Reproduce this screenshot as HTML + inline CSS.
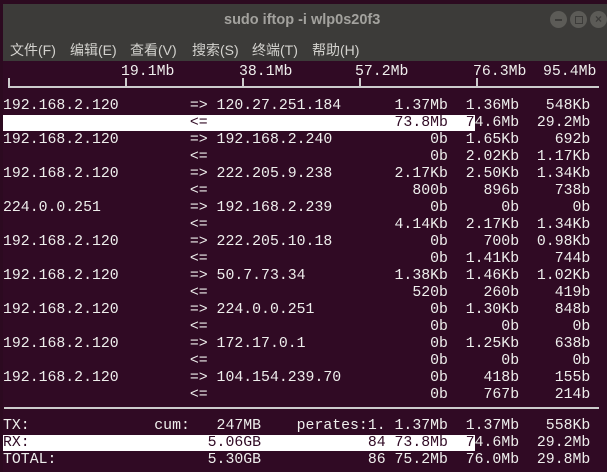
<!DOCTYPE html>
<html><head><meta charset="utf-8"><style>
*{margin:0;padding:0;box-sizing:border-box}
html,body{width:607px;height:472px;overflow:hidden;background:#2c0a20;position:relative}
#win{position:absolute;left:3px;top:4px;width:604px;height:468px;background:#300a24}
#title{position:absolute;left:0;top:0;width:604px;height:33px;background:#3c3b39;color:#a3a29e;font:bold 14.5px "Liberation Sans",sans-serif;text-align:center;line-height:27px}
#title span{position:absolute;left:221px;top:3px}
.btn{position:absolute;top:7px;width:17px;height:17px;border-radius:50%;background:#5c5b57}
#menu{position:absolute;left:0;top:33px;width:604px;height:24px;background:#3c3b39;color:#d3d2ce;font:14px "Liberation Sans","Noto Sans CJK SC",sans-serif}
#menu span{position:absolute;top:3px}
pre{position:absolute;left:0;font:14.83px/17px "Liberation Mono",monospace;color:#eeeeec;white-space:pre}
.w{background:#fff;color:#300a24}
.lbl{position:absolute;top:60px;font:14.83px/17px "Liberation Mono",monospace;color:#eeeeec}
.tk{position:absolute;top:74px;width:2px;height:10px;background:#ccc}
.hl{position:absolute;height:2px;background:#ccc}
</style></head><body>
<div id="win">
<div id="title"><span>sudo iftop -i wlp0s20f3</span>
<div class="btn" style="left:547px"><div style="position:absolute;left:5px;top:8px;width:7px;height:1.5px;background:#3c3b39"></div></div>
<div class="btn" style="left:567px"><div style="position:absolute;left:4.5px;top:4.5px;width:8px;height:8px;border:1.5px solid #3c3b39"></div></div>
<div class="btn" style="left:587px;color:#3c3b39;font:bold 12px 'Liberation Sans',sans-serif;text-align:center;line-height:17px">×</div>
</div>
<div id="menu"><span style="left:7px">文件(F)</span><span style="left:67px">编辑(E)</span><span style="left:127px">查看(V)</span><span style="left:189px">搜索(S)</span><span style="left:249px">终端(T)</span><span style="left:309px">帮助(H)</span></div>
<div class="lbl" style="left:118px">19.1Mb</div>
<div class="lbl" style="left:236px">38.1Mb</div>
<div class="lbl" style="left:352px">57.2Mb</div>
<div class="lbl" style="left:470px">76.3Mb</div>
<div class="lbl" style="left:540px">95.4Mb</div>
<div class="tk" style="left:5px"></div><div class="tk" style="left:122px"></div><div class="tk" style="left:239px"></div><div class="tk" style="left:356px"></div><div class="tk" style="left:473px"></div>
<div class="hl" style="left:5px;top:82px;width:591px"></div>
<pre style="top:94px">192.168.2.120        => 120.27.251.184      1.37Mb  1.36Mb   548Kb
<span class="w">                     &lt;=                     73.8Mb  7</span>4.6Mb  29.2Mb
192.168.2.120        => 192.168.2.240           0b  1.65Kb    692b
                     &lt;=                         0b  2.02Kb  1.17Kb
192.168.2.120        => 222.205.9.238       2.17Kb  2.50Kb  1.34Kb
                     &lt;=                       800b    896b    738b
224.0.0.251          => 192.168.2.239           0b      0b      0b
                     &lt;=                     4.14Kb  2.17Kb  1.34Kb
192.168.2.120        => 222.205.10.18           0b    700b  0.98Kb
                     &lt;=                         0b  1.41Kb    744b
192.168.2.120        => 50.7.73.34          1.38Kb  1.46Kb  1.02Kb
                     &lt;=                       520b    260b    419b
192.168.2.120        => 224.0.0.251             0b  1.30Kb    848b
                     &lt;=                         0b      0b      0b
192.168.2.120        => 172.17.0.1              0b  1.25Kb    638b
                     &lt;=                         0b      0b      0b
192.168.2.120        => 104.154.239.70          0b    418b    155b
                     &lt;=                         0b    767b    214b</pre>
<div class="hl" style="left:1px;top:403px;width:595px"></div>
<pre style="top:414px">TX:              cum:   247MB    perates:1. 1.37Mb  1.37Mb   558Kb
<span class="w">RX:                    5.06GB            84 73.8Mb  7</span>4.6Mb  29.2Mb
TOTAL:                 5.30GB            86 75.2Mb  76.0Mb  29.8Mb</pre>
</div>
</body></html>
